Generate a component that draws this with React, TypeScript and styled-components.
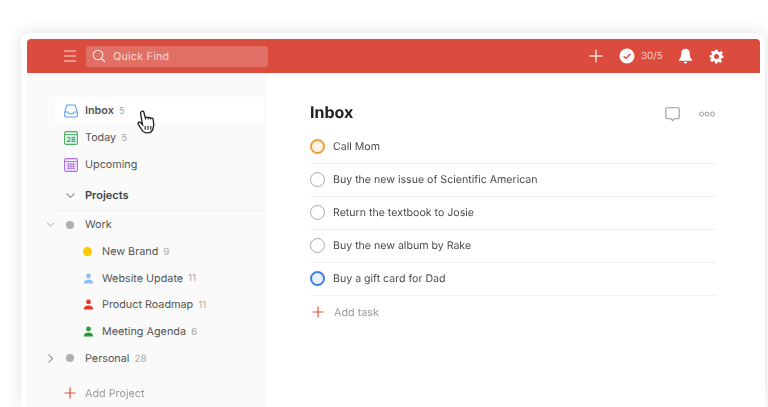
import React from "react";
import styled, { createGlobalStyle } from "styled-components";

const Global = createGlobalStyle`
  html, body { margin: 0; padding: 0; height: 100%; background: #fff; overflow: hidden; }
  body { font-family: Inter, "Noto Sans", "Liberation Sans", sans-serif; -webkit-font-smoothing: antialiased; text-rendering: geometricPrecision; }
  #root { height: 407px; overflow: hidden; }
`;

const Stage = styled.div`
  height: 407px;
  padding: 33px 3px 0 21px;
  box-sizing: border-box;
  background: #fff;
  overflow: hidden;
`;
const Frame = styled.div`
  position: relative;
  height: 374px;
  box-sizing: border-box;
  padding: 6px 5px 0 6px;
  background: #fff;
  border-radius: 8px 8px 0 0;
  box-shadow: 0 0 16px rgba(0, 0, 0, 0.13);
  filter: blur(0.45px);
`;
const Header = styled.header`
  height: 34px;
  background: #db4c3f;
  border-radius: 4px 4px 0 0;
  display: flex;
  align-items: center;
  padding: 0 36px 0 36px;
  color: #fff;
`;
const IconSlot = styled.span<{ $gap?: number }>`
  display: flex;
  align-items: center;
  justify-content: center;
  flex: none;
  margin-left: ${(p) => p.$gap ?? 0}px;
`;
const Search = styled.div`
  width: 182px;
  height: 21px;
  margin-left: 9px;
  border-radius: 3px;
  background: rgba(255, 255, 255, 0.2);
  display: flex;
  align-items: center;
  gap: 7px;
  padding-left: 6px;
  box-sizing: border-box;
  font-size: 10.8px;
  letter-spacing: 0.2px;
  color: rgba(255, 255, 255, 0.72);
`;
const HeaderRight = styled.div`
  margin-left: auto;
  display: flex;
  align-items: center;
`;
const Karma = styled.span`
  font-size: 9.8px;
  color: rgba(255, 255, 255, 0.72);
  margin-left: 6px;
  width: 21px;
`;
const Body = styled.div`
  display: flex;
  height: 334px;
  overflow: hidden;
`;
const Sidebar = styled.aside`
  width: 240px;
  flex: none;
  background: #fafafa;
  padding: 24px 3px 0 28px;
  box-sizing: border-box;
`;
const NavRow = styled.div<{ $active?: boolean }>`
  height: 27px;
  box-sizing: border-box;
  display: flex;
  align-items: center;
  padding-left: 9px;
  font-size: 10.8px;
  color: #555;
  background: ${(p) => (p.$active ? "#fff" : "transparent")};
  font-weight: ${(p) => (p.$active ? 600 : 400)};
  border-radius: 2px;
`;
const ProjectRow = styled.div`
  height: 26.7px;
  display: flex;
  align-items: center;
  padding-left: 28px;
  font-size: 10.8px;
  color: #555;
`;
const NavIcon = styled.span`
  width: 21px;
  flex: none;
  display: flex;
  align-items: center;
`;
const ProjIcon = styled.span`
  width: 19px;
  flex: none;
  display: flex;
  align-items: center;
`;
const Count = styled.span`
  margin-left: 5px;
  margin-top: 1.5px;
  font-size: 9.8px;
  font-weight: 400;
  color: #aaa;
`;
const ProjectsHead = styled.div`
  height: 30px;
  box-sizing: border-box;
  margin-top: 3px;
  padding-bottom: 1px;
  display: flex;
  align-items: center;
  padding-left: 8px;
  font-size: 11px;
  font-weight: 600;
  color: #444;
  border-bottom: 1px solid #f0f0f0;
`;
const Chevron = styled.span`
  width: 22px;
  flex: none;
  display: flex;
  align-items: center;
  padding-left: 2px;
  box-sizing: border-box;
`;
const TreeRow = styled.div`
  height: 27px;
  display: flex;
  align-items: center;
  margin-left: -13px;
  font-size: 10.8px;
  color: #555;
`;
const Toggle = styled.span`
  width: 17px;
  flex: none;
  display: flex;
  align-items: center;
  justify-content: center;
`;
const Dot = styled.span<{ $color: string; $size?: number }>`
  width: ${(p) => p.$size ?? 9}px;
  height: ${(p) => p.$size ?? 9}px;
  border-radius: 50%;
  background: ${(p) => p.$color};
  flex: none;
`;
const DotSlot = styled.span`
  width: 26px;
  flex: none;
  display: flex;
  align-items: center;
  padding-left: 7px;
  box-sizing: border-box;
`;
const AddProject = styled.div`
  height: 27px;
  margin-top: 8px;
  display: flex;
  align-items: center;
  padding-left: 9px;
  font-size: 10.8px;
  color: #999;
`;
const Main = styled.main`
  flex: 1;
  padding: 0 44px 0 43px;
  min-width: 0;
`;
const TitleRow = styled.div`
  height: 57.5px;
  display: flex;
  align-items: center;
  padding-top: 20px;
  box-sizing: border-box;
`;
const Title = styled.h1`
  margin: 0;
  font-size: 16px;
  font-weight: 700;
  color: #202020;
`;
const TitleTools = styled.div`
  margin-left: auto;
  display: flex;
  align-items: center;
  gap: 19px;
  margin-top: 5px;
  padding-right: 1px;
`;
const Task = styled.div`
  height: 33px;
  box-sizing: border-box;
  padding-bottom: 1px;
  display: flex;
  align-items: center;
  gap: 8px;
  border-bottom: 1px solid #f0f0f0;
  font-size: 10.6px;
  color: #4a4a4a;
`;
const Circle = styled.span<{ $color: string; $fill: string; $thick?: boolean }>`
  width: 15px;
  height: 15px;
  box-sizing: border-box;
  border-radius: 50%;
  border: ${(p) => (p.$thick ? "2px" : "1.5px")} solid ${(p) => p.$color};
  background: ${(p) => p.$fill};
  flex: none;
`;
const AddTask = styled.div`
  height: 33px;
  display: flex;
  align-items: center;
  gap: 10px;
  padding-left: 2px;
  font-size: 10.8px;
  color: #999;
`;
const Cursor = styled.svg`
  position: absolute;
  left: 114px;
  top: 76px;
`;

const Person = ({ color }: { color: string }) => (
  <svg width="11" height="11" viewBox="0 0 11 11">
    <circle cx="5.5" cy="2.9" r="2.4" fill={color} />
    <path d="M.8 10.5c0-2.8 1.9-4 4.7-4s4.7 1.2 4.7 4z" fill={color} />
  </svg>
);
const Down = ({ size = 11, color = "#999" }: { size?: number; color?: string }) => (
  <svg width={size} height={size} viewBox="0 0 11 11" fill="none" stroke={color} strokeWidth="1.1">
    <path d="M1.5 3.5 5.5 7.5 9.5 3.5" />
  </svg>
);
const Plus = ({ size, color, w = 1.1 }: { size: number; color: string; w?: number }) => (
  <svg width={size} height={size} viewBox="0 0 12 12" stroke={color} strokeWidth={w}>
    <path d="M6 .5v11M.5 6h11" />
  </svg>
);

const projects = [
  { name: "New Brand", count: 9, icon: <Dot $color="#fcc800" /> },
  { name: "Website Update", count: 11, icon: <Person color="#8fbdee" /> },
  { name: "Product Roadmap", count: 11, icon: <Person color="#e8382e" /> },
  { name: "Meeting Agenda", count: 6, icon: <Person color="#2a9a3c" /> },
];
const tasks = [
  { text: "Call Mom", color: "#f29d38", fill: "#fdf2e6", thick: true },
  { text: "Buy the new issue of Scientific American", color: "#a8a8a8", fill: "#fff" },
  { text: "Return the textbook to Josie", color: "#a8a8a8", fill: "#fff" },
  { text: "Buy the new album by Rake", color: "#a8a8a8", fill: "#fff" },
  { text: "Buy a gift card for Dad", color: "#3f7fe8", fill: "#e9f0fc", thick: true },
];

export default function App() {
  return (
    <Stage>
      <Global />
      <Frame>
        <Header>
          <IconSlot>
            <svg width="14" height="12" viewBox="0 0 14 12" stroke="#fff" strokeOpacity=".8" strokeWidth="1.1">
              <path d="M1 1h12M1 6h12M1 11h12" />
            </svg>
          </IconSlot>
          <Search>
            <svg width="14" height="14" viewBox="0 0 14 14" fill="none" stroke="#fff" strokeOpacity=".85" strokeWidth="1.1">
              <circle cx="6" cy="6" r="4.8" />
              <path d="M9.5 9.5 13 13" />
            </svg>
            Quick Find
          </Search>
          <HeaderRight>
            <IconSlot>
              <Plus size={14} color="rgba(255,255,255,.85)" />
            </IconSlot>
            <IconSlot $gap={16}>
              <svg width="16" height="16" viewBox="0 0 16 16">
                <circle cx="8" cy="8" r="7.5" fill="#fff" />
                <path d="M4.6 8.2 7 10.5 11.4 5.8" fill="none" stroke="#db4c3f" strokeWidth="1.4" />
              </svg>
            </IconSlot>
            <Karma>30/5</Karma>
            <IconSlot $gap={16}>
              <svg width="15" height="16" viewBox="0 0 14 15" fill="#fff">
                <path d="M7 .8C4.4.8 3 2.7 3 5.2c0 3-.9 4.6-2.2 6v.8h12.4v-.8C11.9 9.8 11 8.2 11 5.2 11 2.7 9.6.8 7 .8z" />
                <path d="M5.3 13h3.4a1.7 1.5 0 0 1-3.4 0z" />
              </svg>
            </IconSlot>
            <IconSlot $gap={16}>
              <svg width="15" height="15" viewBox="0 0 24 24">
                <path
                  fill="#fff"
                  fillRule="evenodd"
                  d="M10 1h4l.7 3.200 1.900.8 2.800-1.800 2.800 2.800-1.800 2.800.8 1.900L23 10v4l-3.200.7-.8 1.900 1.800 2.800-2.800 2.800-2.800-1.800-1.900.8L14 23h-4l-.7-3.200-1.900-.8-2.800 1.800-2.800-2.800 1.800-2.800-.8-1.900L1 14v-4l3.200-.7.8-1.900L3.200 4.600 4.600 3.200l2.800.4 1.900-.8zM12 8a4 4 0 1 0 0 8 4 4 0 0 0 0-8z"
                />
              </svg>
            </IconSlot>
          </HeaderRight>
        </Header>
        <Body>
          <Sidebar>
            <NavRow $active>
              <NavIcon>
                <svg width="14" height="14" viewBox="0 0 14 14" fill="none" stroke="#5f9ef0" strokeWidth="1.1">
                  <path d="M3 1h8l2.3 7v3.500a1.500 1.500 0 0 1-1.500 1.500H2.200A1.500 1.500 0 0 1 .7 11.500V8z" />
                  <path d="M.9 8h3l1 1.700h4.200l1-1.700h3" />
                </svg>
              </NavIcon>
              Inbox<Count>5</Count>
            </NavRow>
            <NavRow>
              <NavIcon>
                <svg width="14" height="14" viewBox="0 0 14 14" fill="none">
                  <rect x=".6" y=".6" width="12.8" height="12.8" rx="1.5" stroke="#4caf6a" strokeWidth="1.1" fill="#e3f3e7" />
                  <path d="M.8 3.600h12.400" stroke="#4caf6a" />
                  <text x="7" y="11.200" textAnchor="middle" fontSize="7" fontWeight="600" fill="#3f9a5a" stroke="none">28</text>
                </svg>
              </NavIcon>
              Today<Count>5</Count>
            </NavRow>
            <NavRow>
              <NavIcon>
                <svg width="14" height="14" viewBox="0 0 14 14" fill="none">
                  <rect x=".6" y=".6" width="12.8" height="12.8" rx="1.5" stroke="#a970e0" strokeWidth="1.1" fill="#f5eefc" />
                  <path d="M.8 3.600h12.400" stroke="#a970e0" />
                  <path d="M2.800 6h8.400M2.800 8.200h8.400M2.800 10.400h8.400M4.600 5v6.500M7 5v6.500M9.400 5v6.500" stroke="#a970e0" strokeWidth=".8" />
                </svg>
              </NavIcon>
              Upcoming
            </NavRow>
            <ProjectsHead>
              <Chevron>
                <Down />
              </Chevron>
              Projects
            </ProjectsHead>
            <TreeRow>
              <Toggle>
                <Down size={9} />
              </Toggle>
              <DotSlot>
                <Dot $color="#b0b0b0" $size={8} />
              </DotSlot>
              Work
            </TreeRow>
            {projects.map((p) => (
              <ProjectRow key={p.name}>
                <ProjIcon>{p.icon}</ProjIcon>
                {p.name}
                <Count>{p.count}</Count>
              </ProjectRow>
            ))}
            <TreeRow>
              <Toggle>
                <svg width="9" height="11" viewBox="0 0 9 11" fill="none" stroke="#999" strokeWidth="1.1">
                  <path d="M2.500 1.500 6.500 5.500 2.500 9.500" />
                </svg>
              </Toggle>
              <DotSlot>
                <Dot $color="#b0b0b0" $size={8} />
              </DotSlot>
              Personal<Count>28</Count>
            </TreeRow>
            <AddProject>
              <NavIcon>
                <Plus size={12} color="#e8503f" w={1.2} />
              </NavIcon>
              Add Project
            </AddProject>
          </Sidebar>
          <Main>
            <TitleRow>
              <Title>Inbox</Title>
              <TitleTools>
                <svg width="15" height="15" viewBox="0 0 15 15" fill="none" stroke="#999" strokeWidth="1.1">
                  <path d="M2 .8h11a1.200 1.200 0 0 1 1.200 1.200v8.500a1.200 1.200 0 0 1-1.200 1.200H9.500l-2 2-1.500-2H2A1.200 1.200 0 0 1 .8 10.500V2A1.200 1.200 0 0 1 2 .8z" />
                </svg>
                <svg width="16" height="6" viewBox="0 0 16 6" fill="none" stroke="#999" strokeWidth="1">
                  <circle cx="2.5" cy="3" r="2" />
                  <circle cx="8" cy="3" r="2" />
                  <circle cx="13.5" cy="3" r="2" />
                </svg>
              </TitleTools>
            </TitleRow>
            {tasks.map((t) => (
              <Task key={t.text}>
                <Circle $color={t.color} $fill={t.fill} $thick={t.thick} />
                {t.text}
              </Task>
            ))}
            <AddTask>
              <Plus size={12} color="#e8503f" w={1.2} />
              Add task
            </AddTask>
          </Main>
        </Body>
        <Cursor width="23" height="27" viewBox="0 0 20 24">
          <path
            d="M5.500 2.200c.9-.6 1.900-.2 2.200.8l1.300 5c.3-1 2-1 2.400.2.400-1 2-.9 2.400.3.500-.7 2-.4 2.200.9.600 2.800.6 5.800-.3 8.300-.7 2-1.900 3.500-4.700 3.500-3 0-4.400-1.100-5.500-3.200L2.600 13.500c-.7-1.100.7-2.600 2-1.500l1.900 1.900L4.700 4c-.1-.8.200-1.400.8-1.800z"
            fill="#fff"
            stroke="#222"
            strokeWidth="1.2"
          />
          <path d="M8.800 15v3.500M11.300 15v3.500M13.800 15v3.500" stroke="#222" strokeWidth="1" />
        </Cursor>
      </Frame>
    </Stage>
  );
}
